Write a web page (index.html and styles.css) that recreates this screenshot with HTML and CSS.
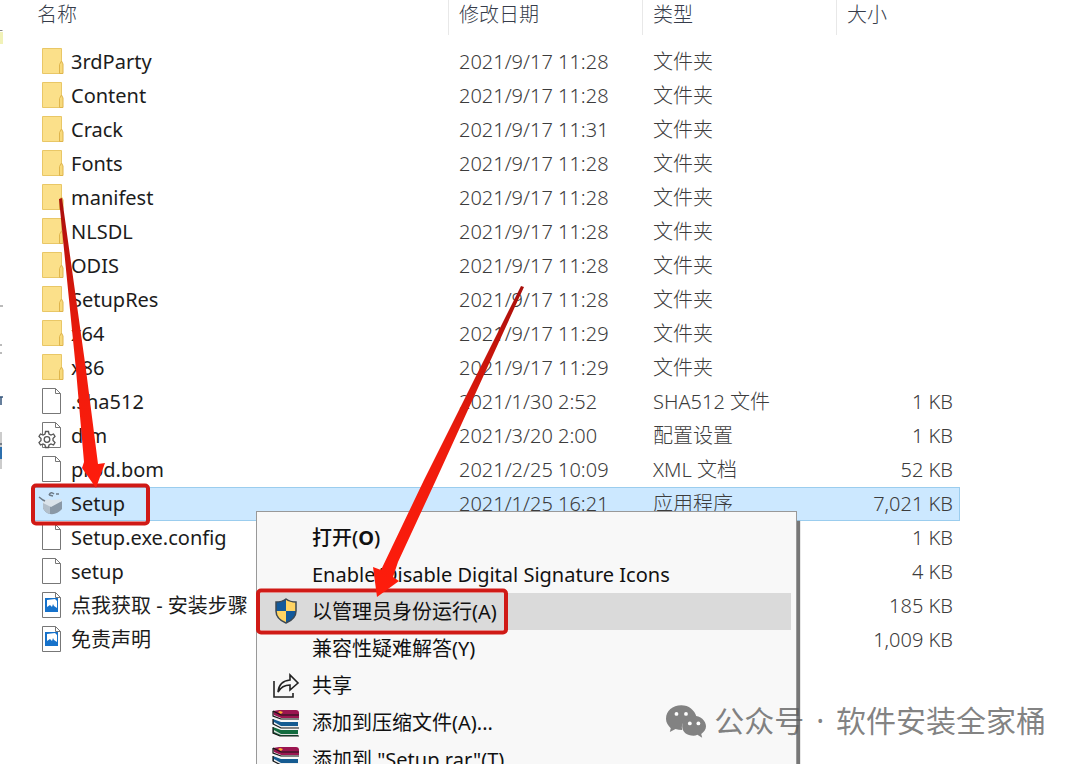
FILE: index.html
```html
<!DOCTYPE html>
<html lang="zh-CN">
<head>
    <meta charset="UTF-8">
    <meta name="viewport" content="width=device-width, initial-scale=1.0">
    <title>Setup</title>
    <link rel="stylesheet" href="styles.css">
</head>
<body>
    <!-- shared icons -->
    <svg class="sprite" aria-hidden="true">
        <symbol id="folder" viewBox="0 0 26 28">
            <path d="M4.500 1.500h19v25h-19z" fill="#fbe08a" stroke="#e9c766"/>
            <path d="M21.500 26.500v-9l2-3.500 1.500 3v9.500z" fill="#f8da7c" stroke="#dfb54c"/>
        </symbol>
        <symbol id="file" viewBox="0 0 26 28">
            <path d="M4.500 1.500h13l5 5v20h-18z" fill="#fff" stroke="#777"/>
            <path d="M17.500 1.500v5h5" fill="none" stroke="#777"/>
        </symbol>
        <symbol id="config" viewBox="0 0 26 28">
            <path d="M4.500 1.500h13l5 5v20h-18z" fill="#fff" stroke="#777"/>
            <path d="M17.500 1.500v5h5" fill="none" stroke="#777"/>
            <path d="M7.500 10.500h3l.5 2.500 2 1 2.500-1 1.500 2.500-2 2v2l2 2-1.500 2.500-2.500-1-2 1-.5 2.500h-3L7 24l-2-1-2.500 1L1 21.500l2-2v-2l-2-2L2.500 13 5 14l2-1z" fill="#fff" stroke="#555" stroke-width="1.300"/>
            <circle cx="9" cy="18.500" r="2.800" fill="#fff" stroke="#555" stroke-width="1.300"/>
        </symbol>
        <symbol id="picture" viewBox="0 0 26 28">
            <path d="M4.500 1.500h13l5 5v20h-18z" fill="#fff" stroke="#777"/>
            <path d="M17.500 1.500v5h5" fill="none" stroke="#777"/>
            <path d="M7 7h13v14H7z" fill="#1672cb"/>
            <path d="M9 9l8-1 2 2v7l-3-2-1-2-1 3-2-2-3 2z" fill="#fff"/>
        </symbol>
        <symbol id="installer" viewBox="0 0 26 28">
            <path d="M5 12l7 4 12-4v8q-5 6-12 5-5-1-7-6z" fill="#8a98a6"/>
            <path d="M5 12l7 4v9q-5-1-7-6z" fill="#b3bfca"/>
            <path d="M5 12q5-3 9-1l9-1 1 2-11 6-8-4z" fill="#dbe3ea"/>
            <path d="M1 8l4 3 2 1M11 6q2-4 5-1M11 6l4 1M18 5h3" fill="none" stroke="#6d7a86" stroke-width="1.500"/>
        </symbol>
        <symbol id="books" viewBox="0 0 28 28">
            <path d="M1 2l6-1h17q3 0 3 3v5H9L2 7z" fill="#9b1550"/>
            <path d="M2 6l7 3h18v2H9L2 9z" fill="#eee"/>
            <path d="M1 10l8 3h17v5H8l-7-3z" fill="#155b91"/>
            <path d="M2 13l7 4h17v2H9l-7-2z" fill="#eee"/>
            <path d="M1 18l8 3h17v6H8l-7-3z" fill="#126b3e"/>
            <path d="M2 21l7 4h17v1H9l-7-3z" fill="#ddd"/>
            <path d="M1 2l8 4h18M1 2v5l8 3h18M1 10v5l8 4h18M1 18v6l7 3h19" fill="none" stroke="#151515" stroke-width="1.200"/>
            <path d="M8 2l3 1-2 2-3-2z" fill="#ffb02e"/>
        </symbol>
    </svg>

    <main class="explorer">
        <svg class="pane-edge" viewBox="0 0 4 480" aria-hidden="true">
            <path d="M0 30.500h2.500" stroke="#888"/>
            <path d="M0 32h3v12H0z" fill="#f1f2b8"/>
            <path d="M0 306h3M0 345h2M0 353h2" stroke="#777"/>
            <path d="M0 397h3M1 397v8" stroke="#35557c" stroke-width="1.500"/>
            <path d="M0 432h2v37H0z" fill="#ccc"/>
            <path d="M0 444h2" stroke="#234"/>
            <path d="M0 447h2v12H0z" fill="#2c6fad"/>
        </svg>

        <table class="files">
            <colgroup>
                <col class="col-name">
                <col class="col-date">
                <col class="col-type">
                <col class="col-size">
            </colgroup>
            <thead>
                <tr><th>名称</th><th>修改日期</th><th>类型</th><th>大小</th></tr>
            </thead>
            <tbody>
                <tr><td><svg class="icon"><use href="#folder"/></svg>3rdParty</td><td>2021/9/17 11:28</td><td>文件夹</td><td></td></tr>
                <tr><td><svg class="icon"><use href="#folder"/></svg>Content</td><td>2021/9/17 11:28</td><td>文件夹</td><td></td></tr>
                <tr><td><svg class="icon"><use href="#folder"/></svg>Crack</td><td>2021/9/17 11:31</td><td>文件夹</td><td></td></tr>
                <tr><td><svg class="icon"><use href="#folder"/></svg>Fonts</td><td>2021/9/17 11:28</td><td>文件夹</td><td></td></tr>
                <tr><td><svg class="icon"><use href="#folder"/></svg>manifest</td><td>2021/9/17 11:28</td><td>文件夹</td><td></td></tr>
                <tr><td><svg class="icon"><use href="#folder"/></svg>NLSDL</td><td>2021/9/17 11:28</td><td>文件夹</td><td></td></tr>
                <tr><td><svg class="icon"><use href="#folder"/></svg>ODIS</td><td>2021/9/17 11:28</td><td>文件夹</td><td></td></tr>
                <tr><td><svg class="icon"><use href="#folder"/></svg>SetupRes</td><td>2021/9/17 11:28</td><td>文件夹</td><td></td></tr>
                <tr><td><svg class="icon"><use href="#folder"/></svg>x64</td><td>2021/9/17 11:29</td><td>文件夹</td><td></td></tr>
                <tr><td><svg class="icon"><use href="#folder"/></svg>x86</td><td>2021/9/17 11:29</td><td>文件夹</td><td></td></tr>
                <tr><td><svg class="icon"><use href="#file"/></svg>.sha512</td><td>2021/1/30 2:52</td><td>SHA512 文件</td><td>1 KB</td></tr>
                <tr><td><svg class="icon"><use href="#config"/></svg>dlm</td><td>2021/3/20 2:00</td><td>配置设置</td><td>1 KB</td></tr>
                <tr><td><svg class="icon"><use href="#file"/></svg>prod.bom</td><td>2021/2/25 10:09</td><td>XML 文档</td><td>52 KB</td></tr>
                <tr class="selected"><td><svg class="icon"><use href="#installer"/></svg>Setup</td><td>2021/1/25 16:21</td><td>应用程序</td><td>7,021 KB</td></tr>
                <tr><td><svg class="icon"><use href="#file"/></svg>Setup.exe.config</td><td></td><td></td><td>1 KB</td></tr>
                <tr><td><svg class="icon"><use href="#file"/></svg>setup</td><td></td><td></td><td>4 KB</td></tr>
                <tr><td><svg class="icon"><use href="#picture"/></svg>点我获取 - 安装步骤</td><td></td><td></td><td>185 KB</td></tr>
                <tr><td><svg class="icon"><use href="#picture"/></svg>免责声明</td><td></td><td></td><td>1,009 KB</td></tr>
            </tbody>
        </table>
    </main>

    <div class="context-menu" role="menu">
        <button class="menu-item default" role="menuitem">打开(<b>O</b>)</button>
        <button class="menu-item" role="menuitem">Enable/Disable Digital Signature Icons</button>
        <button class="menu-item active" role="menuitem">
            <svg class="menu-icon" viewBox="0 0 28 28">
                <path d="M14 1q4 3 10 3v9q0 8-10 12Q4 21 4 13V4q6 0 10-3z" fill="#12599b"/>
                <path d="M14 1q4 3 10 3v9H14zM4 13h10v12Q4 21 4 13z" fill="#ffd463"/>
                <path d="M14 1q4 3 10 3v9q0 8-10 12Q4 21 4 13V4q6 0 10-3z" fill="none" stroke="#3d4852" stroke-width="1.500"/>
            </svg>以管理员身份运行(A)
        </button>
        <button class="menu-item" role="menuitem">兼容性疑难解答(Y)</button>
        <button class="menu-item" role="menuitem">
            <svg class="menu-icon" viewBox="0 0 28 28">
                <path d="M2 9v16h19v-4M6 20q1-11 12-12V3l8 8-8 7v-5q-8 0-12 7z" fill="none" stroke="#222" stroke-width="1.600"/>
            </svg>共享
        </button>
        <button class="menu-item" role="menuitem"><svg class="menu-icon"><use href="#books"/></svg>添加到压缩文件(A)...</button>
        <button class="menu-item" role="menuitem"><svg class="menu-icon"><use href="#books"/></svg>添加到 "Setup.rar"(T)</button>
    </div>

    <!-- red callouts over the list and the menu -->
    <svg class="callouts" viewBox="0 0 1080 764" aria-hidden="true">
        <defs>
            <linearGradient id="red" x1="0" y1="0" x2="0" y2="1">
                <stop offset="0" stop-color="#a80f0b"/>
                <stop offset=".5" stop-color="#ee1c0c"/>
                <stop offset="1" stop-color="#ff1c0c"/>
            </linearGradient>
        </defs>
        <rect x="33" y="485.500" width="115" height="38" rx="3" fill="none" stroke="#d01a16" stroke-width="4"/>
        <rect x="258" y="590.500" width="248" height="42" rx="3" fill="none" stroke="#d01a16" stroke-width="4"/>
        <path d="M59 199l3-1 24 172 12 94 7-1-9 25-14-20 2-6-8-92z" fill="url(#red)"/>
        <path d="M521 286l3 1-88 193-38 82-5 15 6 4-22 16-4-30 8 3 43-90z" fill="url(#red)"/>
    </svg>

    <div class="watermark">
        <svg class="wechat" viewBox="0 0 42 34" aria-hidden="true">
            <path d="M16 0C7 0 0 6 0 14c0 4 2 7 5 10l-1 4 6-3q3 1 7 1c-2-8 5-14 15-14C30 5 24 0 16 0z" fill="#828282"/>
            <path d="M29 11c-7 0-12 5-12 11s5 10 12 10q2 0 4-1l5 3-1-4c3-2 5-5 5-8 0-6-6-11-13-11z" fill="#828282"/>
            <g fill="#fff">
                <circle cx="11" cy="9" r="2"/><circle cx="21" cy="9" r="2"/>
                <circle cx="25" cy="19" r="2"/><circle cx="34" cy="19" r="2"/>
            </g>
        </svg>
        <p>公众号<span class="dot"> · </span>软件安装全家桶</p>
    </div>
</body>
</html>
```
FILE: styles.css
```css
* {
    margin: 0;
    padding: 0;
    box-sizing: border-box;
}

body {
    min-height: 100vh;
    overflow: hidden;
    position: relative;
    background: #fff;
    color: #1c1c1c;
    font-family: "Noto Sans", "Noto Sans CJK SC", sans-serif;
    font-size: 20px;
    line-height: 34px;
}

.sprite {
    position: absolute;
    width: 0;
    height: 0;
}

.explorer {
    display: flex;
    align-items: flex-start;
}

.pane-edge {
    width: 4px;
    height: 480px;
    margin-right: 28px;
}

/* file list */
.files {
    table-layout: fixed;
    width: 928px;
    border-collapse: collapse;
    white-space: nowrap;
}

.col-name {
    width: 416px;
}

.col-date,
.col-type {
    width: 194px;
}

.files th {
    height: 45px;
    padding: 0 0 16px 11px;
    background: linear-gradient(#e8e8e8, #e8e8e8) left top / 1px 35px no-repeat;
    color: #363c4a;
    font-weight: 300;
    line-height: 28px;
    text-align: left;
}

.files th:first-child {
    padding-left: 5px;
    background: none;
}

.files td {
    height: 34px;
    padding-left: 11px;
    color: #3c3c3c;
    font-weight: 300;
}

.files td:first-child {
    padding-left: 6px;
    color: #1c1c1c;
    font-weight: 400;
}

.files td:last-child {
    padding-right: 7px;
    text-align: right;
}

.selected {
    background: #cce8ff;
    box-shadow: inset 0 0 0 1px #9bcdee;
}

.icon {
    width: 26px;
    height: 28px;
    margin: 2px 7px 0 0;
    vertical-align: top;
}

/* context menu */
.context-menu {
    position: absolute;
    top: 511px;
    left: 256px;
    width: 541px;
    padding: 7px 5px 7px 1px;
    background: #f8f8f8;
    border: 1px solid #999;
    box-shadow: 3px 10px 1px #777;
}

.menu-item {
    display: flex;
    align-items: center;
    position: relative;
    width: 100%;
    height: 37px;
    padding-left: 54px;
    border: none;
    background: none;
    color: #111;
    font: inherit;
    white-space: nowrap;
}

.menu-item.default {
    font-weight: 500;
}

.menu-item.active {
    background: #dadada;
}

.menu-icon {
    position: absolute;
    left: 14px;
    width: 28px;
    height: 28px;
}

.callouts {
    position: absolute;
    top: 0;
    left: 0;
    width: 1080px;
    height: 764px;
    pointer-events: none;
}

.watermark {
    display: flex;
    align-items: center;
    gap: 8px;
    position: absolute;
    right: 34px;
    bottom: 26px;
    color: rgba(90, 90, 90, 0.75);
    font-size: 30px;
    white-space: nowrap;
}

.watermark .dot {
    margin: 0 4px;
}

.wechat {
    width: 40px;
    height: 33px;
}
```
